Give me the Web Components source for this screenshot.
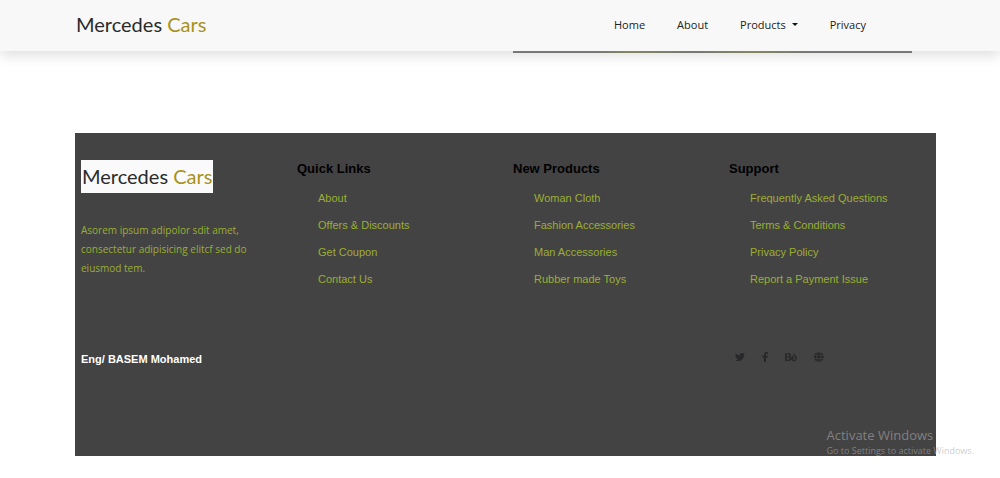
<!DOCTYPE html>
<html lang="en">
<head>
<meta charset="utf-8">
<title>Mercedes Cars</title>
<style>
body { margin: 0; background: #fff; font-family: "Open Sans", "Noto Sans", sans-serif; }
</style>
</head>
<body>
<cars-header></cars-header>
<cars-footer>
  <footer-links heading="Quick Links" items="About|Offers &amp; Discounts|Get Coupon|Contact Us"></footer-links>
  <footer-links heading="New Products" items="Woman Cloth|Fashion Accessories|Man Accessories|Rubber made Toys"></footer-links>
  <footer-links heading="Support" items="Frequently Asked Questions|Terms &amp; Conditions|Privacy Policy|Report a Payment Issue"></footer-links>
</cars-footer>
<activate-notice></activate-notice>
<script>
function define(name, html, setup) {
  customElements.define(name, class extends HTMLElement {
    constructor() {
      super();
      this.attachShadow({ mode: "open" }).innerHTML = html;
    }
    connectedCallback() {
      if (setup) setup(this, this.shadowRoot);
    }
  });
}

define("cars-logo", `
<style>
:host { display: block; font-family: Lato, sans-serif; font-size: 20px; line-height: 33px; color: #2b2b2b; white-space: nowrap; }
span { color: #a8921a; }
</style>Mercedes <span>Cars</span>`);

define("nav-item", `
<style>
:host { display: block; }
a { display: flex; align-items: center; gap: 6px; color: #222; text-decoration: none; font-size: 11px; line-height: 18px; }
i { display: none; border: 3px solid transparent; border-top-color: #111; border-bottom: 0; }
:host([menu]) i { display: block; }
</style><a href="#"><slot></slot><i></i></a>`);

define("cars-header", `
<style>
:host { display: block; }
header { display: flex; align-items: center; justify-content: space-between; min-height: 51px; padding: 0 134px 2px 76px; box-sizing: border-box; background: #f8f8f8; box-shadow: 0 5px 12px rgba(0,0,0,.12); }
nav { display: flex; gap: 32px; }
hr { height: 2px; margin: 0 88px 0 513px; border: 0; position: relative; background: linear-gradient(90deg, #777 20%, #85875f 30%, #777 45%, #85875f 60%, #777 75%); }
</style>
<header>
  <cars-logo></cars-logo>
  <nav>
    <nav-item>Home</nav-item><nav-item>About</nav-item><nav-item menu>Products</nav-item><nav-item>Privacy</nav-item>
  </nav>
</header>
<hr>`);

define("footer-links", `
<style>
:host { display: block; font-family: "Liberation Sans", Arial, sans-serif; }
h2 { margin: 0 0 11px; font-size: 13px; line-height: 18px; color: #000; }
ul { list-style: none; margin: 0; padding: 0 0 0 21px; display: grid; gap: 9px; }
li { font-size: 11px; line-height: 18px; white-space: nowrap; }
a { color: #9bae33; text-decoration: none; }
</style><h2></h2><ul></ul>`, (host, root) => {
  root.querySelector("h2").textContent = host.getAttribute("heading");
  root.querySelector("ul").replaceChildren(...host.getAttribute("items").split("|").map(text => {
    const li = document.createElement("li"), a = document.createElement("a");
    a.href = "#";
    a.textContent = text;
    li.append(a);
    return li;
  }));
});

define("social-links", `
<style>
:host { display: flex; align-items: center; gap: 17px; padding: 0 0 4px 6px; }
a { display: block; color: #28282a; }
svg { display: block; height: 10px; fill: currentColor; }
</style>
<a href="#" aria-label="Twitter"><svg viewBox="0 0 512 512"><path d="M459.4 151.7c.3 4.5.3 9.1.3 13.6 0 138.7-105.6 298.6-298.6 298.6-59.5 0-114.7-17.2-161.1-47.1 8.4 1 16.6 1.3 25.3 1.3 49.1 0 94.2-16.6 130.3-44.8-46.1-1-84.8-31.2-98.1-72.8 6.5 1 13 1.6 19.8 1.6 9.4 0 18.8-1.3 27.6-3.6-48.1-9.7-84.1-52-84.1-103v-1.3c14 7.8 30.2 12.7 47.4 13.3-28.3-18.8-46.8-51-46.8-87.4 0-19.5 5.2-37.4 14.3-53 51.7 63.7 129.3 105.3 216.4 109.8-1.6-7.8-2.6-15.9-2.6-24 0-57.8 46.8-104.9 104.9-104.9 30.2 0 57.5 12.7 76.7 33.1 23.7-4.5 46.5-13.3 66.6-25.3-7.8 24.4-24.4 44.8-46.1 57.8 21.1-2.3 41.6-8.1 60.4-16.2-14.3 20.8-32.2 39.3-52.6 54.3z"/></svg></a>
<a href="#" aria-label="Facebook"><svg viewBox="0 0 320 512"><path d="M279.1 288l14.3-92.7h-88.9v-60.1c0-25.3 12.4-50.1 52.2-50.1h40.4V6.3S260.4 0 225.4 0c-73.2 0-121.1 44.4-121.1 124.7v70.6H22.9V288h81.4v224h100.2V288z"/></svg></a>
<a href="#" aria-label="Behance"><svg viewBox="0 -24 576 480"><path fill-rule="evenodd" d="M0 30h165c78 0 123 28 123 90 0 36-17 62-55 80 48 14 72 49 72 96 0 70-53 108-132 108H0V30zm76 64v88h72c36 0 60-12 60-45 0-34-26-43-60-43H76zm0 143v103h80c40 0 67-14 67-52 0-39-25-51-65-51H76zM373 60h144v35H373V60zm203 230H372c0 42 24 66 64 66 30 0 50-15 57-38h76c-19 66-67 96-134 96-86 0-138-56-138-141 0-82 56-143 138-143 92 0 146 72 141 160zm-80-47c-4-36-24-58-61-58s-59 22-62 58h123z"/></svg></a>
<a href="#" aria-label="Website"><svg viewBox="0 0 496 512"><path d="M336.5 160C322 70.7 287.8 8 248 8s-74 62.7-88.5 152h177zM152 256c0 22.2 1.2 43.5 3.3 64h185.3c2.1-20.5 3.3-41.8 3.3-64s-1.2-43.5-3.3-64H155.3c-2.1 20.5-3.3 41.8-3.3 64zm324.7-96c-28.6-67.9-86.5-120.4-158-141.6 24.4 33.8 41.2 84.7 50 141.6h108zM177.2 18.4C105.8 39.6 47.8 92.1 19.3 160h108c8.7-56.9 25.5-107.8 49.9-141.6zM487.4 192H372.7c2.1 21 3.3 42.5 3.3 64s-1.2 43-3.3 64h114.6c5.5-20.5 8.6-41.8 8.6-64s-3.1-43.5-8.5-64zM120 256c0-21.5 1.2-43 3.3-64H8.6C3.2 212.5 0 233.8 0 256s3.2 43.5 8.6 64h114.6c-2-21-3.2-42.5-3.2-64zm39.5 96c14.5 89.3 48.7 152 88.5 152s74-62.7 88.5-152h-177zm159.3 141.6c71.4-21.2 129.4-73.7 158-141.6h-108c-8.8 56.9-25.6 107.8-50 141.6zM19.3 352c28.6 67.9 86.5 120.4 158 141.6-24.4-33.8-41.2-84.7-50-141.6h-108z"/></svg></a>`);

define("cars-footer", `
<style>
:host { display: block; margin: 80px 64px 0 75px; }
footer { background: #444344; padding: 27px 15px 88px 6px; }
.row { display: grid; grid-template-columns: repeat(4, minmax(0, 1fr)); column-gap: 24px; }
.badge { display: inline-block; background: #fafafa; padding: 0 1px; vertical-align: top; }
p { margin: 28px 0 0; color: #9bae33; font-size: 10px; line-height: 19px; }
.base { margin-top: 62px; align-items: center; }
strong { grid-column: 1 / 4; color: #fff; font: bold 11px/18px "Liberation Sans", Arial, sans-serif; }
</style>
<footer>
  <div class="row">
    <div>
      <div class="badge"><cars-logo></cars-logo></div>
      <p>Asorem ipsum adipolor sdit amet, consectetur adipisicing elitcf sed do eiusmod tem.</p>
    </div>
    <slot></slot>
  </div>
  <div class="row base">
    <strong>Eng/ BASEM Mohamed</strong>
    <social-links></social-links>
  </div>
</footer>`);

define("activate-notice", `
<style>
:host { position: absolute; right: 26px; top: 426px; color: rgba(171,171,171,.6); white-space: nowrap; }
div { font-size: 13px; line-height: 18px; }
small { display: block; font-size: 9px; line-height: 14px; }
</style><div>Activate Windows</div><small>Go to Settings to activate Windows.</small>`);
</script>
</body>
</html>
